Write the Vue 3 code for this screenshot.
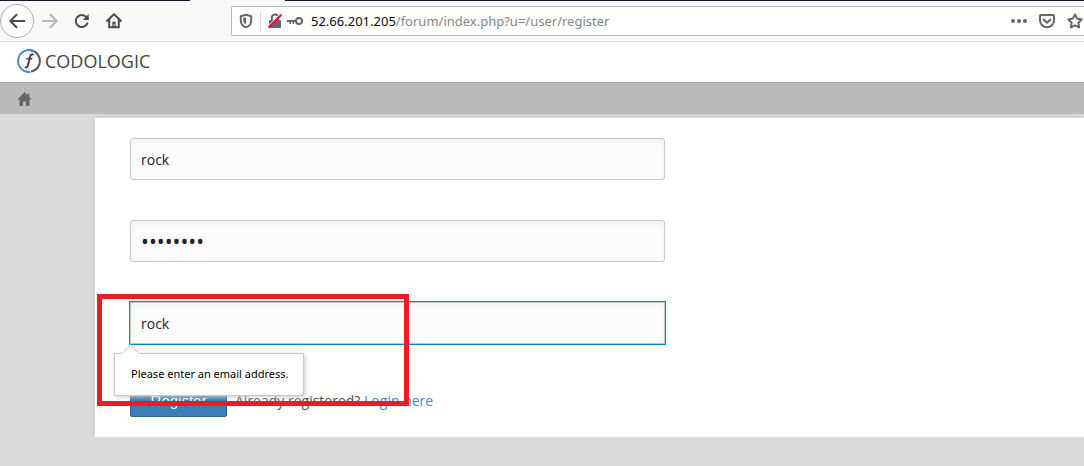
<script setup>
import { ref } from 'vue'

const url = ref('52.66.201.205/forum/index.php?u=/user/register')
const username = ref('rock')
const password = ref('rockrock')
const email = ref('rock')
</script>

<template>
  <div class="page">
    <div class="tabs"><span class="tab-active"></span></div>
    <nav class="toolbar" aria-label="Browser toolbar">
      <button class="nav back" aria-label="Back">
        <svg width="16" height="16" viewBox="0 0 16 16"><path d="M15.5 8H1.5M7.5 1.8L1.3 8l6.2 6.2" /></svg>
      </button>
      <button class="nav forward" aria-label="Forward">
        <svg width="16" height="16" viewBox="0 0 16 16"><path d="M.5 8h14M8.5 1.8L14.7 8l-6.2 6.2" /></svg>
      </button>
      <button class="nav reload" aria-label="Reload">
        <svg width="16" height="16" viewBox="0 0 16 16"><path d="M13.3 10.5A6 6 0 1 1 12.4 4.2L14 5.8" /><path d="M14.7 1v5.9H8.8z" class="solid" /></svg>
      </button>
      <button class="nav home" aria-label="Home">
        <svg width="16" height="16" viewBox="0 0 16 16"><path d="M1 8l7-6.8L15 8M3.2 7v7.2h9.6V7" /><path d="M6.3 14V8.7h3.4V14z" class="solid" /><path d="M8.2 11.5v1" class="knob" /></svg>
      </button>
      <div class="address">
        <button class="mini shield" aria-label="Tracking protection">
          <svg width="14" height="16" viewBox="0 0 14 16"><path d="M7 1.8l5.2 1.4v4.2c0 3.4-2 5.8-5.2 7-3.2-1.2-5.2-3.6-5.2-7V3.2z" class="line" /><path d="M7 4.2v7.4C5.2 10.700 4.200 9.200 4.200 7V5z" /></svg>
        </button>
        <span class="divider"></span>
        <button class="mini lock" aria-label="Connection is not secure">
          <svg width="16" height="16" viewBox="0 0 16 16"><path d="M4.800 7V4.800a3.200 3.200 0 0 1 6.400 0V7" class="line" /><rect x="2" y="7" width="12" height="8" rx="1" /><path d="M1 13L13 1" class="gap" /><path d="M1.500 14.500L14.500 1.500" class="slash" /></svg>
        </button>
        <button class="mini key" aria-label="Permissions">
          <svg width="16" height="10" viewBox="0 0 16 10"><circle cx="12" cy="5" r="3" class="line" /><path d="M0 4h9v2H7v2H5.500V6H4v2H2.500V6H0z" /></svg>
        </button>
        <div class="url-box">
          <input v-model="url" class="url" aria-label="Address" spellcheck="false" />
          <span class="host" aria-hidden="true">52.66.201.205</span>
        </div>
        <button class="mini dots" aria-label="Page actions">
          <svg width="16" height="4" viewBox="0 0 16 4"><circle cx="2" cy="2" r="2" /><circle cx="8" cy="2" r="2" /><circle cx="14" cy="2" r="2" /></svg>
        </button>
        <button class="mini pocket" aria-label="Save to Pocket">
          <svg width="16" height="16" viewBox="0 0 16 16"><path d="M2 2h12a1 1 0 0 1 1 1v4.500a7 6.700 0 0 1-14 0V3a1 1 0 0 1 1-1z" class="line" /><path d="M4.500 6.500L8 9.700l3.500-3.200" class="line" /></svg>
        </button>
        <button class="mini star" aria-label="Bookmark this page">
          <svg width="16" height="16" viewBox="0 0 16 16"><path d="M8 1.500l2.100 4.100 4.600.8-3.300 3.300.7 4.700L8 12.300l-4.100 2.100.7-4.700L1.300 6.400l4.600-.8z" class="line" /></svg>
        </button>
      </div>
    </nav>

    <header class="brand">
      <a href="#" class="brand-link">
        <svg width="24" height="24" viewBox="0 0 24 24">
          <path d="M14 1.200A11 11 0 0 1 14 22.800" fill="none" stroke="#555" stroke-width="2" />
          <path d="M17 2.200A11 11 0 1 0 13 23" fill="none" stroke="#3f86dc" stroke-width="2" />
          <path d="M16.300 6.300c-.3-1.500-2.600-1.200-3.100.9L11 16c-.6 2.300-1.600 2.900-3.200 2.200" fill="none" stroke="#444" stroke-width="2" />
          <path d="M9.300 9.800h6" stroke="#444" stroke-width="1.500" />
        </svg>
        <span>CODOLOGIC</span>
      </a>
    </header>

    <nav class="crumbs" aria-label="Breadcrumb">
      <a href="#" aria-label="Forum home">
        <svg width="16" height="16" viewBox="0 0 16 16"><path d="M7.500 1L.5 8.400h2V15h3.500v-4.500h3V15h3.500V8.400h2L12.300 6V2.500h-1.800v1.700z" fill="#666" /></svg>
      </a>
    </nav>

    <main class="card">
      <form class="form" novalidate @submit.prevent>
        <input v-model="username" class="field" type="text" aria-label="Username" />
        <input v-model="password" class="field password" type="password" aria-label="Password" />
        <div class="email">
          <input v-model="email" class="field active" type="email" aria-label="Email" />
          <div class="tip" role="alert">Please enter an email address.</div>
          <div class="marker"></div>
        </div>
        <div class="actions">
          <button class="register" type="submit">Register</button>
          <span>Already registered? <a href="#">Login here</a></span>
        </div>
      </form>
    </main>
  </div>
</template>

<style>
body {
  margin: 0;
  background: #dadada;
}
</style>

<style scoped>
.page {
  font-family: "Open Sans", "Noto Sans", sans-serif;
  font-size: 14px;
  color: #555;
}
.page * {
  box-sizing: border-box;
}
svg {
  display: block;
}
.tabs {
  height: 1px;
  display: flex;
  background: #15152e;
}
.tab-active {
  width: 95px;
  margin-left: 190px;
  background: #f9f9fa;
}
.toolbar {
  height: 41px;
  display: flex;
  align-items: center;
  background: #f9f9fa;
  border-bottom: 1px solid #dcdcdc;
}
button {
  font: inherit;
  padding: 0;
  border: 0;
  background: none;
}
.nav {
  width: 32px;
  height: 32px;
  display: grid;
  place-items: center;
  flex: none;
}
.nav path {
  fill: none;
  stroke: #4b4b4c;
  stroke-width: 2;
  stroke-linecap: round;
  stroke-linejoin: round;
}
.nav .solid {
  fill: #4b4b4c;
  stroke: none;
}
.nav .knob {
  stroke: #fff;
  stroke-width: 1;
}
.back {
  width: 34px;
  height: 34px;
  border: 1px solid #b0b0b0;
  border-radius: 50%;
  background: #fff;
}
.forward path {
  stroke: #b8b8b9;
}
.address {
  flex: 1;
  min-width: 0;
  height: 30px;
  margin-left: 101px;
  display: flex;
  align-items: center;
  border: 1px solid #b8b8b8;
  border-right: 0;
  border-radius: 2px 0 0 2px;
  background: #fff;
}
.mini {
  flex: none;
  fill: #666;
}
.mini .line {
  fill: none;
  stroke: #666;
  stroke-width: 2;
  stroke-linejoin: round;
  stroke-linecap: round;
}
.mini .gap {
  stroke: #fff;
  stroke-width: 1;
}
.mini .slash {
  stroke: #ff0039;
  stroke-width: 2;
}
.shield {
  margin-left: 7px;
}
.divider {
  width: 1px;
  height: 22px;
  margin: 0 6px 0 7px;
  background: #ddd;
}
.key {
  margin: 0 8px 0 4px;
}
.url-box {
  position: relative;
  flex: 1;
  min-width: 0;
  font-family: "Noto Sans", sans-serif;
  font-size: 13px;
  line-height: 20px;
}
.url {
  display: block;
  width: 100%;
  padding: 0;
  border: 0;
  outline: 0;
  font: inherit;
  color: #858585;
  background: none;
}
.host {
  position: absolute;
  left: 0;
  top: 0;
  color: #0c0c0d;
  background: #fff;
  pointer-events: none;
}
.pocket {
  margin: 0 12px;
}
.star {
  margin-right: 1px;
}
.brand {
  height: 40px;
  display: flex;
  align-items: center;
  padding: 0 0 2px 17px;
  background: #fff;
}
.brand-link {
  display: flex;
  align-items: center;
  gap: 4px;
  color: #444;
  font-size: 18px;
  line-height: 24px;
  text-decoration: none;
}
.crumbs {
  height: 32px;
  display: flex;
  align-items: center;
  padding-left: 17px;
  background: #bababa;
  border-top: 1px solid #a5a5a5;
}
.card {
  margin: 4px 0 0 95px;
  padding: 20px 0 20px 35px;
  display: grid;
  grid-template-columns: 535fr 419fr;
  background: #fff;
  box-shadow: 0 1px 6px #c8c8c8;
}
.form {
  display: flex;
  flex-direction: column;
  gap: 40px;
}
.field {
  display: block;
  width: 100%;
  height: 42px;
  padding: 0 10px;
  border: 1px solid #c8c8c8;
  border-radius: 3px;
  outline: 0;
  background: #fcfcfc;
  box-shadow: inset 0 2px 6px #f0f0f0;
  font: inherit;
  color: #222;
}
.password {
  font-size: 21px;
}
.active {
  outline: 1px solid #0a84c8;
  outline-offset: 0;
  border-radius: 0;
}
.email {
  position: relative;
}
.tip {
  position: absolute;
  z-index: 1;
  left: -16px;
  top: 51px;
  width: 190px;
  height: 43px;
  padding-left: 16px;
  border: 1px solid #c8c8c8;
  background: #fff;
  box-shadow: 1px 1px 4px #ccc;
  font-family: "Noto Sans", sans-serif;
  font-size: 11px;
  line-height: 40px;
  color: #000;
  white-space: nowrap;
}
.tip::before {
  content: "";
  position: absolute;
  left: 9px;
  top: -7px;
  width: 12px;
  height: 12px;
  border: 1px solid #d0d0d0;
  border-width: 1px 0 0 1px;
  background: #fff;
  transform: rotate(45deg);
}
.marker {
  position: absolute;
  z-index: 2;
  left: -33px;
  top: -8px;
  width: 312px;
  height: 112px;
  border: 5px solid #ed1c24;
  pointer-events: none;
}
.actions {
  display: flex;
  align-items: center;
  gap: 8px;
}
.actions a {
  color: #428bca;
  text-decoration: none;
}
.register {
  width: 97px;
  height: 33px;
  border: 1px solid #2d6491;
  border-radius: 2px;
  background: #3a7fb5;
  font-family: "Liberation Sans", Arial, sans-serif;
  font-size: 15px;
  color: #fff;
}
</style>
